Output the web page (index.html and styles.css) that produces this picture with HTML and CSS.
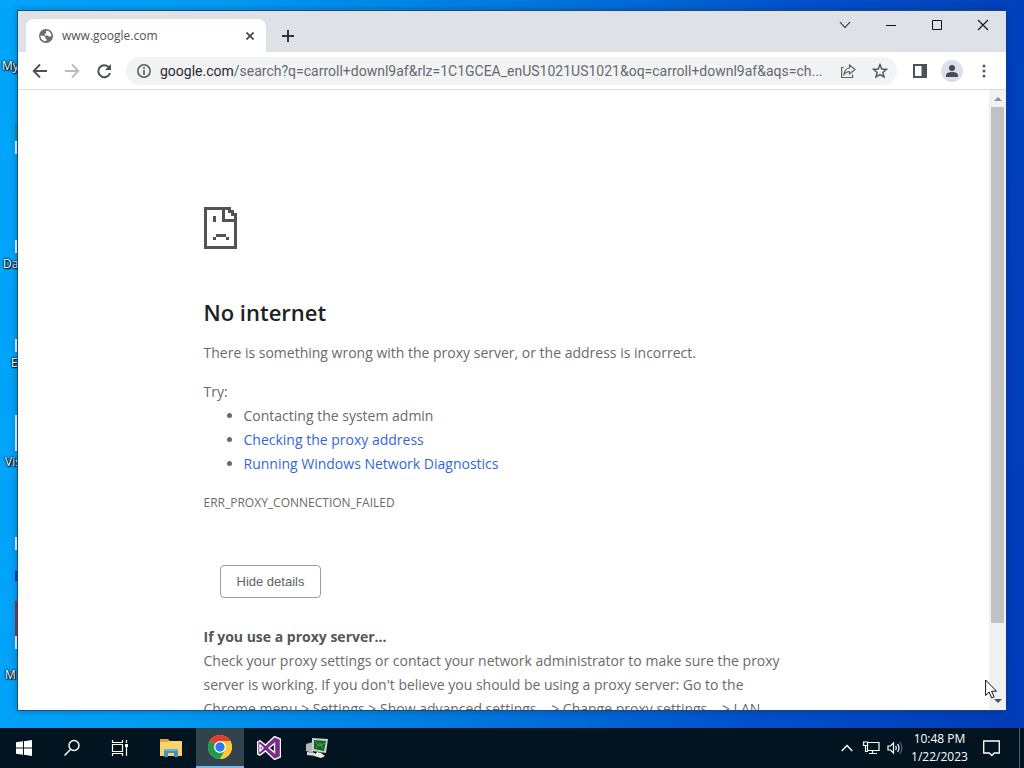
FILE: index.html
```html
<!DOCTYPE html>
<html lang="en">
<head>
<meta charset="UTF-8">
<meta name="viewport" content="width=device-width, initial-scale=1.0">
<title>www.google.com</title>
<link rel="stylesheet" href="styles.css">
</head>
<body>

<div class="desktop">
    <!-- Desktop shortcuts, mostly covered by the window -->
    <span class="shortcut" style="left: 2px; top: 58px">My</span>
    <span class="shortcut" style="left: 3px; top: 256px">Da</span>
    <span class="shortcut" style="left: 11px; top: 355px">E</span>
    <span class="shortcut" style="left: 5px; top: 454px">Vis</span>
    <span class="shortcut" style="left: 5px; top: 667px">M</span>
    <i class="thumb green" style="top: 123px; height: 16px"></i>
    <i class="thumb" style="top: 141px; height: 13px"></i>
    <i class="thumb" style="top: 240px; height: 13px"></i>
    <i class="thumb" style="top: 339px; height: 13px"></i>
    <i class="thumb" style="top: 415px; height: 36px"></i>
    <i class="thumb" style="top: 537px; height: 13px"></i>
    <i class="thumb navy" style="top: 571px; height: 10px"></i>
    <i class="thumb red" style="top: 601px; height: 35px"></i>
    <i class="thumb" style="top: 636px; height: 13px"></i>

    <main class="window">
        <header class="tabstrip">
            <div class="tab">
                <svg class="globe" viewBox="0 0 14 14" width="14" height="14"><circle cx="7" cy="7" r="7" fill="#6a6c70"/><path d="M1.500 6.500l3 .2 2 1.500v1.500l1.500 1-1 1.600C3.500 12 1.300 9.500 1.500 6.500zM7 1.800l2.500.3 2.300 2.200.6 2.700-2 .8-2-1.300-2.500.3-.4-1.500 1.700-1z" fill="#fff"/></svg>
                <span class="tab-title">www.google.com</span>
                <button class="icon-btn tab-close" aria-label="Close tab"><svg viewBox="0 0 8 8" width="8" height="8"><path d="M.5.5l7 7M7.500.5l-7 7" stroke="#3c4043" stroke-width="1.600"/></svg></button>
            </div>
            <button class="icon-btn new-tab" aria-label="New tab"><svg viewBox="0 0 12 12" width="12" height="12"><path d="M6 0v12M0 6h12" stroke="#35363a" stroke-width="2"/></svg></button>
            <div class="window-buttons">
                <button class="icon-btn" aria-label="Search tabs"><svg viewBox="0 0 12 12" width="12" height="12"><path d="M1 3l5 5.500 5-5.500" fill="none" stroke="#222" stroke-width="1.100"/></svg></button>
                <button class="icon-btn" aria-label="Minimize"><svg viewBox="0 0 12 12" width="12" height="12"><path d="M1 6.500h10" stroke="#111"/></svg></button>
                <button class="icon-btn" aria-label="Maximize"><svg viewBox="0 0 12 12" width="12" height="12"><path d="M1.500 1.500h9v9h-9z" fill="none" stroke="#111"/></svg></button>
                <button class="icon-btn" aria-label="Close"><svg viewBox="0 0 12 12" width="12" height="12"><path d="M1 1l10 10M11 1L1 11" stroke="#111" stroke-width="1.100"/></svg></button>
            </div>
        </header>

        <nav class="toolbar">
            <button class="icon-btn nav-btn" aria-label="Back"><svg viewBox="0 0 16 16" width="16" height="16"><path d="M15 8H2M8 1.500L1.700 8 8 14.500" fill="none" stroke="#4d5054" stroke-width="1.800"/></svg></button>
            <button class="icon-btn nav-btn" aria-label="Forward" disabled><svg viewBox="0 0 16 16" width="16" height="16"><path d="M1 8h13M8 1.500L14.300 8 8 14.500" fill="none" stroke="#b9bbbe" stroke-width="1.800"/></svg></button>
            <button class="icon-btn nav-btn" aria-label="Reload"><svg viewBox="0 0 16 16" width="16" height="16"><path d="M13 4.500A6 6 0 1 0 14 10" fill="none" stroke="#4d5054" stroke-width="2"/><path d="M15 1v6H9z" fill="#4d5054"/></svg></button>
            <div class="omnibox">
                <svg viewBox="0 0 14 14" width="14" height="14"><circle cx="7" cy="7" r="6.200" fill="none" stroke="#55585c" stroke-width="1.500"/><path d="M7 6v5M7 3v1.800" stroke="#55585c" stroke-width="1.600"/></svg>
                <div class="url" role="textbox" aria-label="Address"><span class="host">google.com</span>/search?q=carroll+downl9af&amp;rlz=1C1GCEA_enUS1021US1021&amp;oq=carroll+downl9af&amp;aqs=ch...</div>
                <button class="icon-btn" aria-label="Share"><svg viewBox="0 0 16 16" width="16" height="16"><path d="M3.500 4.500H1.600v10h11v-3M9.500 2l5.500 4.500-5.500 4.500V8.500C7 8.500 5.500 9.500 4 11.500c.3-3.500 2-6 5.500-6.500z" fill="none" stroke="#5f6368" stroke-width="1.200"/></svg></button>
                <button class="icon-btn" aria-label="Bookmark"><svg viewBox="0 0 16 16" width="16" height="16"><path d="M8 1.800l1.800 4.200 4.600.4-3.500 3 1.100 4.500L8 11.500l-4 2.400 1.100-4.500-3.500-3L6.200 6z" fill="none" stroke="#55585c" stroke-width="1.500"/></svg></button>
            </div>
            <button class="icon-btn nav-btn" aria-label="Side panel"><svg viewBox="0 0 14 14" width="14" height="14"><path d="M0 0h14v14H0zM2 2v10h6.500V2z" fill="#4d5054" fill-rule="evenodd"/></svg></button>
            <button class="icon-btn avatar" aria-label="Profile"><svg viewBox="0 0 14 14" width="14" height="14"><circle cx="7" cy="4" r="3" fill="#474a50"/><path d="M1 13v-1.500C1 9 4 8 7 8s6 1 6 3.500V13z" fill="#474a50"/></svg></button>
            <button class="icon-btn nav-btn" aria-label="Menu"><svg viewBox="0 0 4 14" width="4" height="14"><g fill="#55585c"><circle cx="2" cy="2" r="1.500"/><circle cx="2" cy="7" r="1.500"/><circle cx="2" cy="12" r="1.500"/></g></svg></button>
        </nav>

        <div class="viewport">
            <div class="page">
                <article class="error">
                    <!-- Sad page icon -->
                    <svg class="sad-icon" viewBox="0 0 33 42" width="33" height="42" shape-rendering="crispEdges"><path d="M0 0h27v3h3v3h3v36H0zM3 3v36h27V15H18V3zM21 3v9h9V9h-3V6h-3V3zM9 9h3v6H9zM12 27h10v3H12zM9 30h3v3H9zM22 30h3v3h-3z" fill="#535353" fill-rule="evenodd"/></svg>
                    <h1>No internet</h1>
                    <p>There is something wrong with the proxy server, or the address is incorrect.</p>
                    <p class="try">Try:</p>
                    <ul>
                        <li>Contacting the system admin</li>
                        <li><a href="#proxy">Checking the proxy address</a></li>
                        <li><a href="#diagnostics">Running Windows Network Diagnostics</a></li>
                    </ul>
                    <p class="code">ERR_PROXY_CONNECTION_FAILED</p>
                    <button class="details-btn">Hide details</button>
                    <section class="details" id="proxy">
                        <h2>If you use a proxy server...</h2>
                        <p>Check your proxy settings or contact your network administrator to make sure the proxy server is working. If you don't believe you should be using a proxy server: Go to the Chrome menu &gt; Settings &gt; Show advanced settings... &gt; Change proxy settings... &gt; LAN</p>
                    </section>
                </article>
            </div>
            <div class="scrollbar">
                <svg viewBox="0 0 8 4" width="8" height="4"><path d="M0 4l4-4 4 4z" fill="#8d8d8d"/></svg>
                <div class="track"><div class="handle"></div></div>
                <svg viewBox="0 0 8 4" width="8" height="4"><path d="M0 0l4 4 4-4z" fill="#505050"/></svg>
            </div>
        </div>
    </main>

    <svg class="cursor" viewBox="0 0 13 20" width="13" height="20"><path d="M.6 1v15.500l3.600-3.400 2.500 5.800 2.400-1-2.500-5.700h4.900z" fill="#fff" stroke="#111" stroke-width="1"/></svg>
</div>

<footer class="taskbar">
    <button class="task" aria-label="Start"><svg viewBox="0 0 16 16" width="16" height="16"><path d="M0 2.300l7-1v6.300H0zM8 1.200L16 0v7.600H8zM0 8.500h7v6.200l-7-1zM8 8.500h8V16l-8-1.200z" fill="#fff"/></svg></button>
    <button class="task" aria-label="Search"><svg viewBox="0 0 18 18" width="18" height="18"><circle cx="11" cy="6.500" r="5" fill="none" stroke="#fff" stroke-width="1.400"/><path d="M7.500 10.500L1.500 16.500" stroke="#fff" stroke-width="1.500"/></svg></button>
    <button class="task" aria-label="Task view"><svg viewBox="0 0 18 18" width="18" height="18"><path d="M1.500 1v2.500h10V1M1.500 17v-2.500h10V17M1.500 5.500h10v7h-10zM15.500 1v3M15.500 8v9" fill="none" stroke="#fff" stroke-width="1.200"/><path d="M14 5h3v3h-3z" fill="#fff"/></svg></button>
    <button class="task folder" aria-label="File Explorer"><svg viewBox="0 0 22 20" width="22" height="20"><path d="M0 1h8l2 2h11v4H0z" fill="#e5a535"/><path d="M0 4h9l1-1h12v15H0z" fill="#fad36d"/><path d="M4 11h14v8h-4v-4H8v4H4z" fill="#4290c5"/><path d="M4 11h14v2H4z" fill="#67b3dd"/></svg></button>
    <button class="task active" aria-label="Chrome"><svg viewBox="0 0 24 24" width="24" height="24"><circle cx="12" cy="12" r="12" fill="#fcc934"/><path d="M12 12L1.600 6A12 12 0 0 1 22.400 6z" fill="#e33b2e"/><path d="M12 12L1.600 6A12 12 0 0 0 12 24l5.200-9z" fill="#229a4b"/><path d="M12 6h10.400A12 12 0 0 1 12 24l5.200-9z" fill="#fcc934"/><circle cx="12" cy="12" r="6" fill="#fff"/><circle cx="12" cy="12" r="4.700" fill="#267ce9"/></svg></button>
    <button class="task" aria-label="Visual Studio"><svg viewBox="0 0 24 24" width="24" height="24"><path d="M17.500.6l6 2.400v18l-6 2.400L8.500 15 3 19.200.6 18V6L3 4.800 8.500 9zM17.500 7.500L12 12l5.500 4.500zM3 9v6l3-3z" fill="#7a2a8c" stroke="#fff" stroke-width="1.400" fill-rule="evenodd"/></svg></button>
    <button class="task" aria-label="Monitor"><svg viewBox="0 0 24 22" width="24" height="22"><path d="M1 7l7-2v11l-7-2z" fill="#aeb9b5"/><path d="M2 15l8 1 1 3-9-1z" fill="#dce2df"/><path d="M7 1l16 1-2 14-14-2z" fill="#c7d0cb"/><path d="M9 3l12 1-2 10-10-2z" fill="#126329"/><path d="M10 4l4 5 6-3M11 11l4-5 3 6" fill="none" stroke="#51a44a" stroke-width="1"/><path d="M12 15l4 1 4 3-4 2-7-2z" fill="#eef0e9"/></svg></button>

    <div class="tray">
        <button class="tray-btn" aria-label="Show hidden icons"><svg viewBox="0 0 12 8" width="12" height="8"><path d="M.7 7L6 1.500 11.300 7" fill="none" stroke="#fff" stroke-width="1.400"/></svg></button>
        <button class="tray-btn" aria-label="Network"><svg viewBox="0 0 17 14" width="17" height="14"><path d="M5 1.500h11v8H4.500V5M9.500 9.500v3M6 12.500h8M.6 1h4v3.500h-4zM2.500 4.500v6H5" fill="none" stroke="#fff" stroke-width="1.200"/></svg></button>
        <button class="tray-btn" aria-label="Volume"><svg viewBox="0 0 16 14" width="16" height="14"><path d="M1 5h2.500L6.500 2v10L3.500 9H1zM8.500 5c1 1 1 3 0 4M10.500 3c2 2 2 6 0 8" fill="none" stroke="#fff" stroke-width="1.200"/><path d="M12.500 1c3 3 3 9 0 12" fill="none" stroke="#73808a"/></svg></button>
        <div class="clock"><span>10:48 PM</span><span>1/22/2023</span></div>
        <button class="tray-btn notes" aria-label="Notifications"><svg viewBox="0 0 17 17" width="17" height="17"><path d="M.7 1h15.600v12h-5l-2.500 2.500L6.300 13H.7z" fill="none" stroke="#fff" stroke-width="1.300"/></svg></button>
        <span class="peek"></span>
    </div>
</footer>

</body>
</html>
```

FILE: styles.css
```css
* {
    box-sizing: border-box;
}
body {
    margin: 0;
    height: 100vh;
    display: flex;
    flex-direction: column;
    overflow: hidden;
    font-family: "Open Sans", "Noto Sans", sans-serif;
}
button {
    border: none;
    background: none;
    padding: 0;
    font-family: inherit;
}
svg {
    display: block;
    flex: none;
}

/* Desktop */
.desktop {
    position: relative;
    flex: 1;
    min-height: 0;
    padding: 10px 18px 17px 17px;
    background: linear-gradient(95deg, #00a6fb 0%, #009cf2 20%, #0079df 48%, #0050cb 75%, #003bb8 100%);
}
.shortcut {
    position: absolute;
    color: #fff;
    font-size: 12px;
    line-height: 16px;
    white-space: nowrap;
    text-shadow: 1px 1px 1px #000, 0 0 2px #000, 0 0 2px #000;
}
.thumb {
    position: absolute;
    left: 15px;
    width: 4px;
    background: #e8f6ff;
}
.green { background: #159a83; }
.navy { background: #1a35a0; }
.red { background: #a62a3c; }

/* Browser window */
.window {
    position: relative;
    height: 100%;
    display: flex;
    flex-direction: column;
    background: #fff;
    border: 1px solid #1c4a70;
    border-right: none;
    box-shadow: 0 0 8px rgba(0, 20, 80, 0.3);
}
.icon-btn {
    display: flex;
    align-items: center;
    justify-content: center;
}
.tabstrip {
    display: flex;
    height: 41px;
    padding-left: 8px;
    background: #dee1e6;
}
.tab {
    display: flex;
    align-items: center;
    gap: 9px;
    width: 240px;
    margin-top: 8px;
    padding: 0 12px 0 13px;
    background: #fff;
    border-radius: 8px 8px 0 0;
}
.tab-title {
    flex: 1;
    font-size: 12px;
    color: #505358;
}
.new-tab {
    width: 44px;
    padding-top: 9px;
}
.window-buttons {
    display: flex;
    margin-left: auto;
    height: 28px;
}
.window-buttons .icon-btn {
    width: 46px;
}
.toolbar {
    display: flex;
    align-items: center;
    height: 38px;
    padding: 0 6px;
    border-bottom: 1px solid #dadce0;
}
.nav-btn {
    width: 32px;
    height: 28px;
}
.omnibox {
    flex: 1;
    min-width: 0;
    display: flex;
    align-items: center;
    gap: 16px;
    height: 28px;
    margin: 0 7px 0 6px;
    padding: 0 9px 0 11px;
    border-radius: 14px;
    background: #f1f3f4;
}
.url {
    flex: 1;
    min-width: 0;
    margin-left: -7px;
    overflow: hidden;
    text-overflow: ellipsis;
    white-space: nowrap;
    font-family: Roboto, sans-serif;
    font-size: 14px;
    color: #66696d;
}
.host {
    color: #292b2e;
}
.avatar {
    width: 22px;
    height: 22px;
    margin: 0 5px;
    border-radius: 50%;
    background: #dddfe8;
}

/* Error page */
.viewport {
    flex: 1;
    min-height: 0;
    display: flex;
}
.page {
    flex: 1;
    overflow: hidden;
    color: #6a6a6a;
    font-size: 14px;
    line-height: 24px;
}
.error {
    max-width: 600px;
    margin: 0 auto;
    padding-top: 117px;
}
.error p {
    margin: 0;
}
h1 {
    margin: 47px 0 13px;
    font-size: 22px;
    font-weight: 600;
    line-height: 32px;
    color: #202124;
}
.error .try {
    margin-top: 15px;
}
ul {
    margin: 0;
    padding-left: 40px;
}
.error a {
    color: #3367d6;
    text-decoration: none;
}
.error .code {
    margin-top: 15px;
    font-size: 12px;
}
.details-btn {
    display: block;
    margin: 50px 0 27px 16px;
    height: 33px;
    padding: 0 16px;
    border: 1px solid #9aa0a6;
    border-radius: 4px;
    background: #fff;
    color: #5f6368;
    font-family: "Liberation Sans", sans-serif;
    font-size: 13px;
}
.details {
    padding-right: 8px;
}
h2 {
    margin: 0;
    font-size: 14px;
    font-weight: 700;
    line-height: 24px;
    color: #565656;
}
.scrollbar {
    display: flex;
    flex-direction: column;
    align-items: center;
    gap: 6px;
    width: 17px;
    padding: 7px 0;
    background: #f1f1f1;
}
.track {
    flex: 1;
    width: 13px;
}
.handle {
    height: 88%;
    background: #c1c1c1;
}
.cursor {
    position: absolute;
    left: 985px;
    top: 679px;
}

/* Taskbar */
.taskbar {
    display: flex;
    height: 40px;
    background: #021420;
    color: #fff;
}
.task {
    display: flex;
    align-items: center;
    justify-content: center;
    width: 48px;
}
.task.folder {
    margin-left: 2px;
    width: 50px;
}
.active {
    margin-right: 1px;
    background: #33434e;
    border-bottom: 2px solid #76b9ed;
}
.tray {
    display: flex;
    margin-left: auto;
}
.tray-btn {
    display: flex;
    align-items: center;
    justify-content: center;
    width: 24px;
}
.clock {
    display: flex;
    flex-direction: column;
    justify-content: center;
    align-items: center;
    width: 65px;
    font-size: 12px;
    line-height: 18px;
}
.notes {
    width: 38px;
}
.peek {
    width: 5px;
    margin-left: 9px;
    border-left: 1px solid #4d5b66;
}
```
